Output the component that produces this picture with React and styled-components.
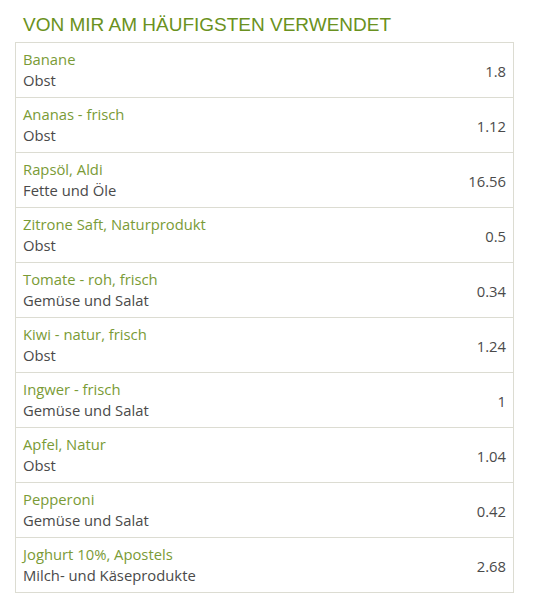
import React from "react";
import styled, { createGlobalStyle } from "styled-components";

const Global = createGlobalStyle`
  html, body { margin: 0; padding: 0; background: #fff; }
  body { font-family: "Open Sans", "Noto Sans", sans-serif; }
`;

const Page = styled.div`
  padding: 14px 32px 0 15px;
  width: 545px;
  box-sizing: border-box;
`;

const Title = styled.h2`
  margin: 0 0 6px 8px;
  font-family: "Liberation Sans", Arial, sans-serif;
  font-weight: normal;
  font-size: 19px;
  line-height: 22px;
  color: #6a9120;
`;

const List = styled.div`
  border: 1px solid #dcdcd2;
  width: 499px;
  box-sizing: border-box;
`;

const Row = styled.div`
  display: flex;
  align-items: center;
  justify-content: space-between;
  height: ${(p) => (p.$first ? "54px" : "55px")};
  box-sizing: border-box;
  padding: 0 7px 0 7px;
  border-top: ${(p) => (p.$first ? "none" : "1px solid #dcdcd2")};
`;

const Info = styled.div`
  display: flex;
  flex-direction: column;
`;

const Name = styled.span`
  font-size: 14.8px;
  line-height: 21px;
  color: #7a9b36;
`;

const Category = styled.span`
  font-size: 14.8px;
  line-height: 21px;
  color: #4a4a4a;
`;

const Value = styled.span`
  font-size: 14.8px;
  color: #4a4a4a;
  margin-top: 2px;
`;

const items = [
  ["Banane", "Obst", "1.8"],
  ["Ananas - frisch", "Obst", "1.12"],
  ["Rapsöl, Aldi", "Fette und Öle", "16.56"],
  ["Zitrone Saft, Naturprodukt", "Obst", "0.5"],
  ["Tomate - roh, frisch", "Gemüse und Salat", "0.34"],
  ["Kiwi - natur, frisch", "Obst", "1.24"],
  ["Ingwer - frisch", "Gemüse und Salat", "1"],
  ["Apfel, Natur", "Obst", "1.04"],
  ["Pepperoni", "Gemüse und Salat", "0.42"],
  ["Joghurt 10%, Apostels", "Milch- und Käseprodukte", "2.68"],
];

export default function App() {
  return (
    <>
      <Global />
      <Page>
        <Title>VON MIR AM HÄUFIGSTEN VERWENDET</Title>
        <List>
          {items.map(([n, c, v], i) => (
            <Row key={n} $first={i === 0}>
              <Info>
                <Name>{n}</Name>
                <Category>{c}</Category>
              </Info>
              <Value>{v}</Value>
            </Row>
          ))}
        </List>
      </Page>
    </>
  );
}
